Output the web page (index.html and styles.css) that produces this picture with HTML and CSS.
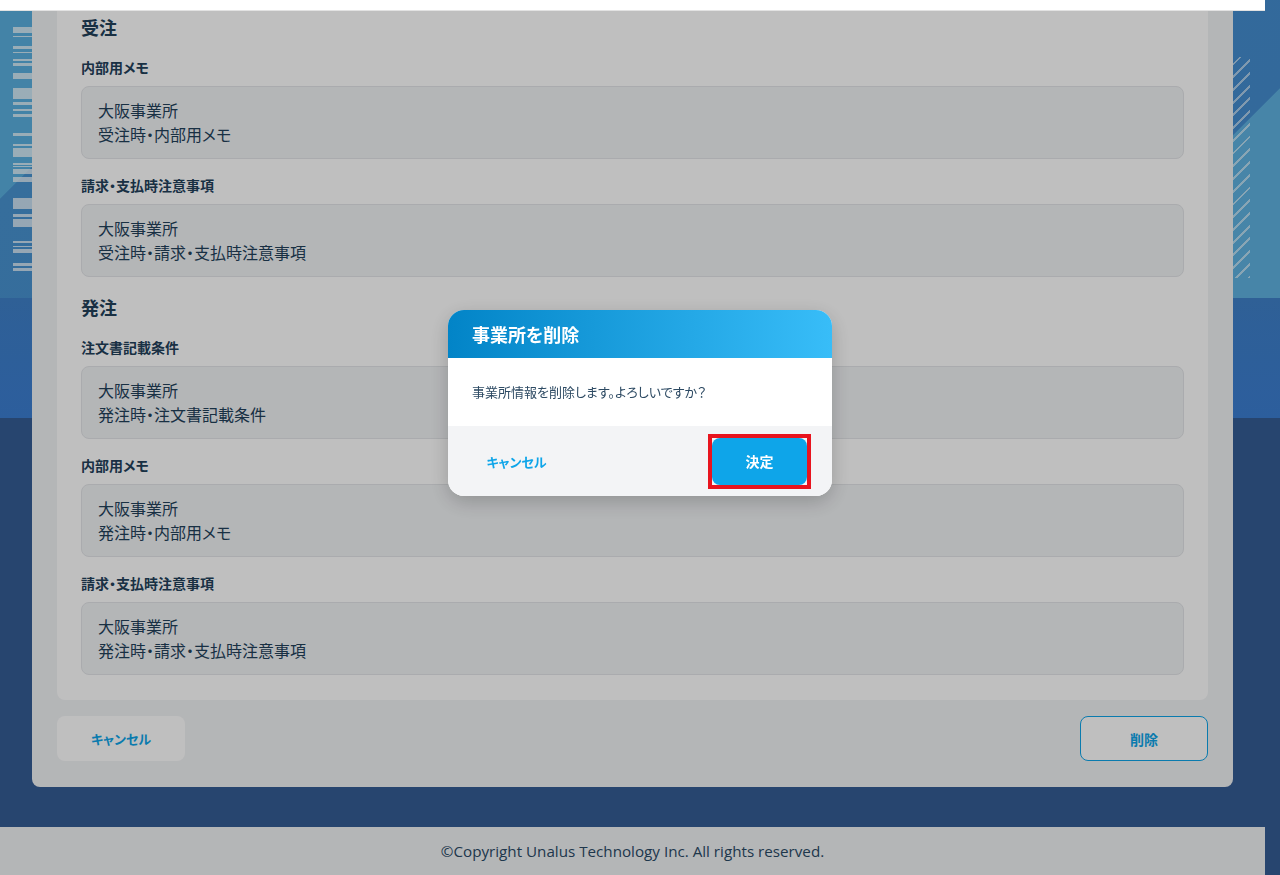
FILE: index.html
```html
<!DOCTYPE html>
<html lang="ja">
<head>
    <meta charset="UTF-8">
    <meta name="viewport" content="width=device-width, initial-scale=1.0">
    <title>事業所詳細</title>
    <link rel="stylesheet" href="styles.css">
</head>
<body>
    <!-- background decoration behind the card -->
    <div class="deco-bars"></div>
    <div class="deco-stripes"></div>

    <div class="page">
        <header class="topbar"></header>

        <main class="content">
            <div class="card">
                <div class="panel">
                    <h2 class="section-title">受注</h2>
                    <div class="field">
                        <div class="field-label">内部用メモ</div>
                        <div class="field-value">大阪事業所<br>受注時・内部用メモ</div>
                    </div>
                    <div class="field">
                        <div class="field-label">請求・支払時注意事項</div>
                        <div class="field-value">大阪事業所<br>受注時・請求・支払時注意事項</div>
                    </div>

                    <h2 class="section-title">発注</h2>
                    <div class="field">
                        <div class="field-label">注文書記載条件</div>
                        <div class="field-value">大阪事業所<br>発注時・注文書記載条件</div>
                    </div>
                    <div class="field">
                        <div class="field-label">内部用メモ</div>
                        <div class="field-value">大阪事業所<br>発注時・内部用メモ</div>
                    </div>
                    <div class="field">
                        <div class="field-label">請求・支払時注意事項</div>
                        <div class="field-value">大阪事業所<br>発注時・請求・支払時注意事項</div>
                    </div>
                </div>

                <div class="actions">
                    <button class="btn btn-cancel">キャンセル</button>
                    <button class="btn btn-outline">削除</button>
                </div>
            </div>
        </main>

        <footer class="footer">©Copyright Unalus Technology Inc. All rights reserved.</footer>
    </div>

    <!-- delete confirmation -->
    <div class="overlay">
        <div class="modal">
            <div class="modal-head">事業所を削除</div>
            <div class="modal-body">事業所情報を削除します。よろしいですか？</div>
            <div class="modal-foot">
                <button class="modal-cancel">キャンセル</button>
                <span class="highlight"><button class="modal-ok">決定</button></span>
            </div>
        </div>
    </div>
</body>
</html>
```

FILE: styles.css
```css
* {
    box-sizing: border-box;
}
body {
    margin: 0;
    font-family: "Noto Sans CJK JP", "Noto Sans", sans-serif;
    font-feature-settings: "palt";
    color: #22405a;
    background:
        linear-gradient(to bottom, transparent 298px, #3f80c9 298px, #3b7ed2 418px, #355c94 418px),
        linear-gradient(135deg, #5aafdf 140px, #4893d1 141px, #448dcf 967px, #5fb2e0 968px);
    background-color: #355c94;
}
button {
    font-family: inherit;
    font-feature-settings: "palt";
    cursor: pointer;
}

.deco-bars {
    position: absolute;
    left: 13px;
    top: 27px;
    width: 24px;
    height: 245px;
    background: linear-gradient(to bottom,
        rgba(255,255,255,.7) 0 6px, transparent 6px 9px,
        rgba(255,255,255,.7) 9px 10px, transparent 10px 19px,
        rgba(255,255,255,.7) 19px 22px, transparent 22px 25px,
        rgba(255,255,255,.7) 25px 26px, transparent 26px 32px,
        rgba(255,255,255,.7) 32px 34px, transparent 34px 36px,
        rgba(255,255,255,.7) 36px 39px, transparent 39px 46px,
        rgba(255,255,255,.7) 46px 52px, transparent 52px 61px,
        rgba(255,255,255,.7) 61px 72px, transparent 72px 75px,
        rgba(255,255,255,.7) 75px 78px, transparent 78px 82px,
        rgba(255,255,255,.7) 82px 84px, transparent 84px 87px,
        rgba(255,255,255,.7) 87px 90px, transparent 90px 106px,
        rgba(255,255,255,.7) 106px 109px, transparent 109px 117px,
        rgba(255,255,255,.7) 117px 119px, transparent 119px 121px,
        rgba(255,255,255,.7) 121px 130px, transparent 130px 136px,
        rgba(255,255,255,.7) 136px 138px, transparent 138px 139px,
        rgba(255,255,255,.7) 139px 140px, transparent 140px 142px,
        rgba(255,255,255,.7) 142px 147px, transparent 147px 150px,
        rgba(255,255,255,.7) 150px 155px, transparent 155px 171px,
        rgba(255,255,255,.7) 171px 182px, transparent 182px 187px,
        rgba(255,255,255,.7) 187px 190px, transparent 190px 192px,
        rgba(255,255,255,.7) 192px 200px, transparent 200px 214px,
        rgba(255,255,255,.7) 214px 216px, transparent 216px 219px,
        rgba(255,255,255,.7) 219px 220px, transparent 220px 222px,
        rgba(255,255,255,.7) 222px 226px, transparent 226px 236px,
        rgba(255,255,255,.7) 236px 239px, transparent 239px 241px,
        rgba(255,255,255,.7) 241px 244px, transparent 244px);
}
.deco-stripes {
    position: absolute;
    top: 57px;
    right: 30px;
    width: 40px;
    height: 221px;
    background: repeating-linear-gradient(-45deg, rgba(255,255,255,.55) 0 2px, transparent 2px 9px);
}

.page {
    width: calc(100% - 15px);
}
.topbar {
    position: relative;
    z-index: 20;
    height: 11px;
    background: #fff;
    border-bottom: 1px solid #e2e2e2;
}
.content {
    padding: 0 32px 40px;
}
.card {
    position: relative;
    background: #f1f3f5;
    border-radius: 0 0 8px 8px;
    padding: 0 25px 26px;
}
.panel {
    background: #fff;
    border-radius: 0 0 8px 8px;
    padding: 4px 24px 25px;
}
.section-title {
    margin: 0;
    padding-bottom: 2px;
    font-size: 18px;
    line-height: 24px;
    font-weight: 700;
}
.field + .section-title {
    margin-top: 18px;
}
.field {
    margin-top: 16px;
}
.field-label {
    font-size: 14px;
    line-height: 20px;
    font-weight: 700;
    margin-bottom: 9px;
}
.field-value {
    background: #f1f3f5;
    border: 1px solid #e3e5e8;
    border-radius: 8px;
    padding: 11px 16px 12px;
    font-size: 16px;
    line-height: 24px;
}
.actions {
    display: flex;
    justify-content: space-between;
    margin-top: 16px;
}
.btn {
    width: 128px;
    height: 45px;
    border: 1px solid transparent;
    border-radius: 8px;
    background: #fff;
    color: #0ea5e9;
    font-size: 14px;
    font-weight: 700;
}
.btn-cancel {
    font-size: 13px;
}
.btn-outline {
    border-color: #0ea5e9;
}
.footer {
    height: 48px;
    background: #f1f3f5;
    display: flex;
    align-items: center;
    justify-content: center;
    font-family: "Open Sans", sans-serif;
    font-size: 15.2px;
    color: #2a4a66;
}

.overlay {
    position: fixed;
    inset: 0;
    z-index: 10;
    background: rgba(0, 0, 0, .25);
    display: flex;
    justify-content: center;
    align-items: flex-start;
    padding-top: 310px;
}
.modal {
    width: 384px;
    background: #fff;
    border-radius: 16px;
    overflow: hidden;
    box-shadow: 0 6px 20px rgba(0, 0, 0, .2);
}
.modal-head {
    height: 48px;
    padding: 0 24px;
    display: flex;
    align-items: center;
    background: linear-gradient(90deg, #0284c7, #38bdf8);
    color: #fff;
    font-size: 18px;
    font-weight: 700;
}
.modal-body {
    height: 68px;
    padding: 0 24px 2px;
    display: flex;
    align-items: center;
    font-size: 13px;
    color: #2d4a63;
}
.modal-foot {
    height: 70px;
    padding: 0 21px;
    background: #f3f4f6;
    display: flex;
    align-items: center;
    justify-content: space-between;
}
.modal-cancel {
    width: 95px;
    height: 47px;
    border: 0;
    background: none;
    color: #0ea5e9;
    font-size: 13px;
    font-weight: 700;
}
.highlight {
    display: block;
    border: 4px solid #e8141e;
    line-height: 0;
}
.modal-ok {
    width: 95px;
    height: 47px;
    border: 0;
    border-radius: 8px;
    background: #0ea5e9;
    color: #fff;
    font-size: 14px;
    font-weight: 700;
}
```
